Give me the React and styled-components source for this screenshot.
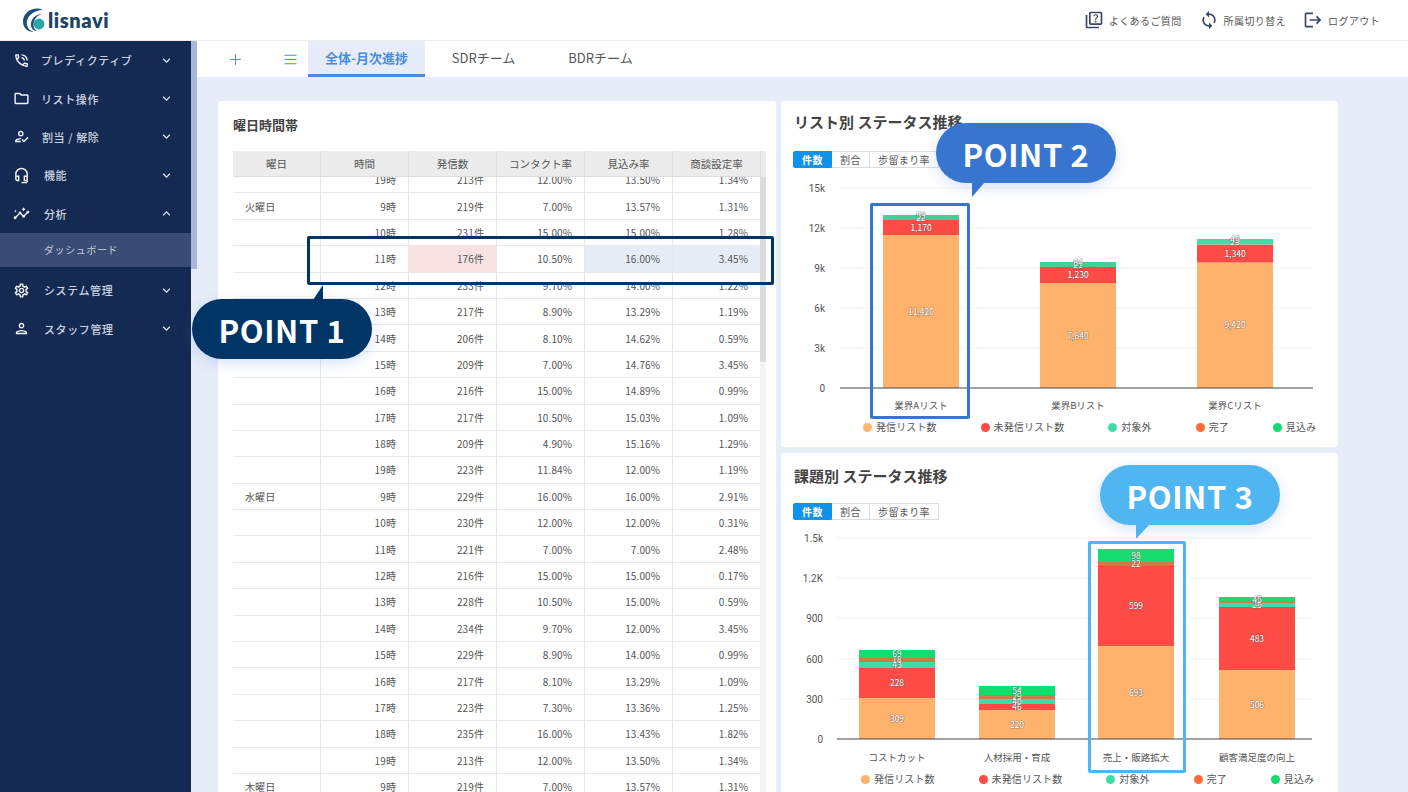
import { createGlobalStyle, styled } from "styled-components"
import {
  MdExpandMore, MdExpandLess, MdOutlineQuiz, MdSync, MdLogout, MdOutlinePhoneInTalk, MdOutlineFolder,
  MdOutlineHowToReg, MdOutlineHeadsetMic, MdOutlineInsights, MdOutlineSettings, MdOutlinePerson,
} from "react-icons/md"
import { LuPlus, LuMenu } from "react-icons/lu"

const FONT = `"Noto Sans CJK JP", "Noto Sans", sans-serif`

const Global = createGlobalStyle`
  html, body { margin: 0; padding: 0; height: 100%; overflow: hidden; background: #fff; }
  body { font-family: ${FONT}; color: #555; }
  * { box-sizing: border-box; }
`

const Page = styled.div`
  position: relative;
  width: 1408px;
  height: 792px;
  overflow: hidden;
  display: flex;
  flex-direction: column;
`

const TopBar = styled.header`
  height: 41px;
  flex: none;
  display: flex;
  align-items: center;
  padding: 0 28px 0 22px;
  border-bottom: 1px solid #eee;
  background: #fff;
`

const Logo = styled.div`
  display: flex;
  align-items: center;
  gap: 2px;
  font-family: Lato, sans-serif;
  font-weight: 800;
  font-size: 20px;
  letter-spacing: 0.6px;
  color: #1d4468;
`

const Actions = styled.div`
  margin-left: auto;
  display: flex;
  align-items: center;
  gap: 17px;
`

const Action = styled.div`
  display: flex;
  align-items: center;
  gap: 5px;
  font-size: 10px;
  letter-spacing: 0.4px;
  color: #555;
  svg { font-size: 20px; color: #3b4766; }
`

const Body = styled.div`
  flex: 1;
  min-height: 0;
  display: flex;
`

const Sidebar = styled.nav`
  width: 191px;
  flex: none;
  background: #152a52;
  color: #ccd3e0;
`

const NavItem = styled.div`
  height: 38.4px;
  display: flex;
  align-items: center;
  padding: 0 17px 0 13px;
  font-size: 11px;
  font-weight: 500;
  letter-spacing: 0.6px;
  svg { flex: none; }
  .icon { font-size: 17px; color: #f2f4f8; margin-right: ${(p) => p.$gap}px; }
  .chev { margin-left: auto; font-size: 15px; color: #dfe4ec; }
`

const SubItem = styled.div`
  height: 34px;
  margin-bottom: 4px;
  display: flex;
  align-items: center;
  padding-left: 44px;
  background: #3a4c75;
  font-size: 10px;
  letter-spacing: 0.6px;
  color: #c5ccdb;
`

const SideScroll = styled.div`
  width: 6px;
  flex: none;
  background: #e6edf8;
`

const SideThumb = styled.div`
  height: 228px;
  background: #a9b6da;
`

const Main = styled.main`
  flex: 1;
  min-width: 0;
  display: flex;
  flex-direction: column;
  background: #e6edf8;
`

const TabBar = styled.div`
  height: 36px;
  flex: none;
  display: flex;
  align-items: stretch;
  background: #fff;
`

const TabTool = styled.div`
  display: flex;
  align-items: center;
  justify-content: center;
  width: ${(p) => p.$w}px;
  color: #4a8bdc;
  font-size: 17px;
`

const Tab = styled.div`
  width: 117px;
  display: flex;
  align-items: center;
  justify-content: center;
  font-size: 13px;
  font-weight: ${(p) => (p.$active ? 700 : 400)};
  color: ${(p) => (p.$active ? "#4a8bdc" : "#555")};
  background: ${(p) => (p.$active ? "#e6edf8" : "#fff")};
  border-bottom: 3px solid ${(p) => (p.$active ? "#4a8bdc" : "transparent")};
`

const Content = styled.div`
  flex: 1;
  min-height: 0;
  overflow: hidden;
  padding: 24px 0 0 21px;
  display: grid;
  grid-template-columns: 558px 557px;
  grid-template-rows: 346px 400px;
  column-gap: 5px;
  row-gap: 6px;
`

const Card = styled.section`
  background: #fff;
  border-radius: 3px;
  position: relative;
  min-width: 0;
`

const TableCard = styled(Card)`
  grid-row: 1 / span 2;
  padding: 0 10px 0 15px;
  overflow: hidden;
`

const Title = styled.h2`
  margin: 0;
  height: 50px;
  padding-top: ${(p) => p.$top}px;
  font-size: ${(p) => p.$size}px;
  line-height: 20px;
  font-weight: 700;
  color: #444;
`

const TableHead = styled.div`
  display: grid;
  grid-template-columns: repeat(6, 88px);
  width: 533px;
  height: 26px;
  background: #ececec;
  position: relative;
  z-index: 1;
`

const HeadCell = styled.div`
  display: flex;
  align-items: center;
  justify-content: center;
  font-size: 10.5px;
  color: #555;
  border-right: 1px solid #dcdcdc;
  border-bottom: 1px solid #ddd;
`

const TableBody = styled.div`
  display: flex;
  height: 640px;
  overflow: hidden;
`

const Rows = styled.div`
  width: 527px;
  margin-top: -10px;
  flex: none;
`

const Row = styled.div`
  display: grid;
  grid-template-columns: repeat(6, 88px);
  height: 26.4px;
`

const Cell = styled.div`
  display: flex;
  align-items: center;
  justify-content: ${(p) => (p.$left ? "flex-start" : "flex-end")};
  padding: 0 12px;
  font-size: 10px;
  letter-spacing: 0.1px;
  color: #555;
  background: ${(p) => p.$bg || "transparent"};
  border-right: 1px solid #e8e8e8;
  border-bottom: 1px solid #e8e8e8;
`

const Track = styled.div`
  width: 6px;
  flex: none;
  background: #f3f3f3;
`

const Thumb = styled.div`
  height: 185px;
  background: #dcdcdc;
`

const ChartCard = styled(Card)`
  padding: 0 0 0 13px;
`

const Segment = styled.div`
  display: flex;
  width: 146px;
  height: 17px;
  margin-left: -1px;
`

const SegButton = styled.div`
  flex: ${(p) => p.$w}px 0 0;
  display: flex;
  align-items: center;
  justify-content: center;
  font-size: 10px;
  letter-spacing: 0.4px;
  border: 1px solid ${(p) => (p.$on ? "#0e93e8" : "#ddd")};
  border-left-width: ${(p) => (p.$on ? 1 : 0)}px;
  background: ${(p) => (p.$on ? "#0e93e8" : "#fff")};
  color: ${(p) => (p.$on ? "#fff" : "#555")};
  font-weight: ${(p) => (p.$on ? 700 : 400)};
  border-radius: ${(p) => (p.$on ? "2px 0 0 2px" : "0")};
`

const ChartSvg = styled.svg`
  display: block;
  width: 557px;
  height: 240px;
  margin: 7px 0 0 -13px;
  font-family: ${FONT};
`

const Legend = styled.div`
  display: flex;
  gap: 44px;
  margin-top: 5px;
  padding-left: ${(p) => p.$left}px;
`

const LegendItem = styled.div`
  display: flex;
  align-items: center;
  gap: 4px;
  font-size: 10px;
  line-height: 14px;
  letter-spacing: 0.1px;
  color: #555;
  &::before {
    content: "";
    width: 9px;
    height: 9px;
    border-radius: 50%;
    background: ${(p) => p.$color};
  }
`

const Mark = styled.div`
  position: absolute;
  left: ${(p) => p.$x}px;
  top: ${(p) => p.$y}px;
  width: ${(p) => p.$w}px;
  height: ${(p) => p.$h}px;
  border: 3.5px solid ${(p) => p.$color};
  border-radius: 2px;
  z-index: 4;
`

const Bubble = styled.div`
  position: absolute;
  left: ${(p) => p.$x}px;
  top: ${(p) => p.$y}px;
  width: 180px;
  height: 60px;
  border-radius: 30px;
  background: ${(p) => p.$color};
  color: #fff;
  display: flex;
  align-items: center;
  justify-content: center;
  font-size: 31px;
  font-weight: 700;
  letter-spacing: 0.6px;
  box-shadow: 0 4px 14px rgba(70, 120, 210, 0.22);
  z-index: 5;
  &::after {
    content: "";
    position: absolute;
    background: ${(p) => p.$color};
    left: ${(p) => p.$tailX}px;
    top: -14px;
    width: ${(p) => p.$tailW}px;
    height: 15px;
    clip-path: polygon(100% 0, 100% 100%, 0 100%);
    ${(p) => p.$down && "top: 59px; clip-path: polygon(0 0, 100% 0, 0 100%);"}
  }
`

const rows = [
  ["", "19時", "213件", "12.00%", "13.50%", "1.34%"],
  ["火曜日", "9時", "219件", "7.00%", "13.57%", "1.31%"],
  ["", "10時", "231件", "15.00%", "15.00%", "1.28%"],
  ["", "11時", "176件", "10.50%", "16.00%", "3.45%"],
  ["", "12時", "233件", "9.70%", "14.00%", "1.22%"],
  ["", "13時", "217件", "8.90%", "13.29%", "1.19%"],
  ["", "14時", "206件", "8.10%", "14.62%", "0.59%"],
  ["", "15時", "209件", "7.00%", "14.76%", "3.45%"],
  ["", "16時", "216件", "15.00%", "14.89%", "0.99%"],
  ["", "17時", "217件", "10.50%", "15.03%", "1.09%"],
  ["", "18時", "209件", "4.90%", "15.16%", "1.29%"],
  ["", "19時", "223件", "11.84%", "12.00%", "1.19%"],
  ["水曜日", "9時", "229件", "16.00%", "16.00%", "2.91%"],
  ["", "10時", "230件", "12.00%", "12.00%", "0.31%"],
  ["", "11時", "221件", "7.00%", "7.00%", "2.48%"],
  ["", "12時", "216件", "15.00%", "15.00%", "0.17%"],
  ["", "13時", "228件", "10.50%", "15.00%", "0.59%"],
  ["", "14時", "234件", "9.70%", "12.00%", "3.45%"],
  ["", "15時", "229件", "8.90%", "14.00%", "0.99%"],
  ["", "16時", "217件", "8.10%", "13.29%", "1.09%"],
  ["", "17時", "223件", "7.30%", "13.36%", "1.25%"],
  ["", "18時", "235件", "16.00%", "13.43%", "1.82%"],
  ["", "19時", "213件", "12.00%", "13.50%", "1.34%"],
  ["木曜日", "9時", "219件", "7.00%", "13.57%", "1.31%"],
]

const highlight = { 2: "#f6e1e3", 4: "#e6edf6", 5: "#e6edf6" }

const ORANGE = "#ffb26b"
const RED = "#ff4b45"
const TEAL = "#3fdca8"
const BROWN = "#c97f42"
const GREEN = "#14dc6e"

const legend = [
  ["発信リスト数", ORANGE],
  ["未発信リスト数", RED],
  ["対象外", TEAL],
  ["完了", "#ff6b35"],
  ["見込み", GREEN],
]

// coords are page pixels, the svg viewBox takes care of the offset
const chart1 = {
  viewY: 175,
  x0: 840,
  x1: 1313,
  base: 388,
  ticks: [["15k", 188], ["12k", 228], ["9k", 268], ["6k", 308], ["3k", 348], ["0", 388]],
  tickX: 825,
  labelY: 409,
  bars: [
    {
      x: 883, name: "業界Aリスト",
      parts: [[235, ORANGE, "11,420"], [220, RED, "1,170"], [215, "#45cf96", "22"]],
      extra: ["59"],
    },
    {
      x: 1040, name: "業界Bリスト",
      parts: [[283, ORANGE, "7,840"], [267, RED, "1,230"], [262, "#45cf96", "21"]],
      extra: ["64"],
    },
    {
      x: 1197, name: "業界Cリスト",
      parts: [[262.5, ORANGE, "9,420"], [244.5, RED, "1,340"], [239, TEAL, "25"]],
      extra: ["45"],
    },
  ],
}

const chart2 = {
  viewY: 527,
  x0: 837,
  x1: 1312,
  base: 739,
  ticks: [["1.5k", 538], ["1.2K", 578], ["900", 618], ["600", 659], ["300", 699], ["0", 739]],
  tickX: 823,
  labelY: 761,
  bars: [
    {
      x: 859, name: "コストカット",
      parts: [[698, ORANGE, "309"], [668, RED, "228"], [662, TEAL, "43"], [658, BROWN, "18"], [650, GREEN, "69"]],
    },
    {
      x: 979, name: "人材採用・育成",
      parts: [[710, ORANGE, "220"], [704, RED, "46"], [699, TEAL, "40"], [695, BROWN, "29"], [686, GREEN, "54"]],
    },
    {
      x: 1098, name: "売上・販路拡大",
      parts: [[646, ORANGE, "693"], [566, RED, "599"], [562, BROWN, "22"], [549, GREEN, "98"]],
    },
    {
      x: 1219, name: "顧客満足度の向上",
      parts: [[670, ORANGE, "506"], [607, RED, "483"], [603, TEAL, "25"], [602, BROWN, "8"], [597, GREEN, "45"]],
    },
  ],
}

const BAR_W = 76

const ValueLabel = ({ x, y, children }) => (
  <text
    x={x}
    y={y + 3}
    textAnchor="middle"
    fontSize="8.5"
    fill="#fff"
    stroke="rgba(90,90,90,.55)"
    strokeWidth="1.2"
    paintOrder="stroke"
  >
    {children}
  </text>
)

const Chart = ({ data }) => (
  <ChartSvg viewBox={`781 ${data.viewY} 557 240`}>
    {data.ticks.map(([label, y]) => (
      <g key={label}>
        {label !== "0" && <line x1={data.x0} x2={data.x1} y1={y} y2={y} stroke="#f3f3f3" />}
        <text x={data.tickX} y={y + 3.5} textAnchor="end" fontSize="10" fill="#555" fontFamily="Roboto, sans-serif">
          {label}
        </text>
      </g>
    ))}
    {data.bars.map((bar) => {
      const mid = bar.x + BAR_W / 2
      return (
        <g key={bar.name}>
          {bar.parts.map(([top, color], i) => {
            const bottom = i === 0 ? data.base : bar.parts[i - 1][0]
            return <rect key={i} x={bar.x} y={top} width={BAR_W} height={bottom - top} fill={color} />
          })}
          {bar.parts.map(([top, , label], i) => {
            const bottom = i === 0 ? data.base : bar.parts[i - 1][0]
            return <ValueLabel key={i} x={mid} y={(top + bottom) / 2}>{label}</ValueLabel>
          })}
          {bar.extra && <ValueLabel x={mid} y={bar.parts[bar.parts.length - 1][0] + 1}>{bar.extra[0]}</ValueLabel>}
          <text x={mid} y={data.labelY} textAnchor="middle" fontSize="9.5" fill="#555">{bar.name}</text>
        </g>
      )
    })}
    <line x1={data.x0} x2={data.x1} y1={data.base} y2={data.base} stroke="#444" />
  </ChartSvg>
)

const Status = ({ title, top, data, legendLeft }) => (
  <ChartCard>
    <Title $top={top} $size={15}>{title}</Title>
    <Segment>
      <SegButton $on $w={39}>件数</SegButton>
      <SegButton $w={38}>割合</SegButton>
      <SegButton $w={69}>歩留まり率</SegButton>
    </Segment>
    <Chart data={data} />
    <Legend $left={legendLeft}>
      {legend.map(([label, color]) => (
        <LegendItem key={label} $color={color}>{label}</LegendItem>
      ))}
    </Legend>
  </ChartCard>
)

const nav = [
  { label: "プレディクティブ", Icon: MdOutlinePhoneInTalk, gap: 11 },
  { label: "リスト操作", Icon: MdOutlineFolder, gap: 11 },
  { label: "割当 / 解除", Icon: MdOutlineHowToReg, gap: 12 },
  { label: "機能", Icon: MdOutlineHeadsetMic, gap: 14 },
  { label: "分析", Icon: MdOutlineInsights, gap: 14, open: true },
  { label: "システム管理", Icon: MdOutlineSettings, gap: 14 },
  { label: "スタッフ管理", Icon: MdOutlinePerson, gap: 14 },
]

const App = () => (
  <Page>
    <Global />
    <TopBar>
      <Logo>
        <svg width="24" height="26" viewBox="0 0 24 26">
          <path d="M21 2.5C11 -1 1 5 1 14.5 1 21 6 25.5 12 24.5 8 24 4.6 20.5 4.8 15.5 5 9 11 4 21 2.5Z" fill="#1d4f7c" />
          <path d="M9 18.5C8.5 12 13 7.5 20 7 14 9 11.5 13 11.5 18.5 11.5 21 13 23 15 24 11.5 24 9.3 21.5 9 18.5Z" fill="#1d4f7c" />
          <circle cx="17" cy="17" r="5.4" fill="#2ba6a8" />
        </svg>
        <span>lisnavi</span>
      </Logo>
      <Actions>
        <Action><MdOutlineQuiz />よくあるご質問</Action>
        <Action><MdSync />所属切り替え</Action>
        <Action><MdLogout />ログアウト</Action>
      </Actions>
    </TopBar>
    <Body>
      <Sidebar>
        {nav.map(({ label, Icon, gap, open }) => (
          <div key={label}>
            <NavItem $gap={gap}>
              <Icon className="icon" />
              {label}
              {open ? <MdExpandLess className="chev" /> : <MdExpandMore className="chev" />}
            </NavItem>
            {open && <SubItem>ダッシュボード</SubItem>}
          </div>
        ))}
      </Sidebar>
      <SideScroll><SideThumb /></SideScroll>
      <Main>
        <TabBar>
          <TabTool $w={76}><LuPlus strokeWidth={1.4} /></TabTool>
          <TabTool $w={35}><LuMenu strokeWidth={1.4} /></TabTool>
          <Tab $active>全体-月次進捗</Tab>
          <Tab>SDRチーム</Tab>
          <Tab>BDRチーム</Tab>
        </TabBar>
        <Content>
          <TableCard>
            <Title $top={14} $size={13}>曜日時間帯</Title>
            <TableHead>
              {["曜日", "時間", "発信数", "コンタクト率", "見込み率", "商談設定率"].map((h) => (
                <HeadCell key={h}>{h}</HeadCell>
              ))}
            </TableHead>
            <TableBody>
              <Rows>
                {rows.map((row, r) => (
                  <Row key={r}>
                    {row.map((v, c) => (
                      <Cell key={c} $left={c === 0} $bg={r === 3 ? highlight[c] : undefined}>{v}</Cell>
                    ))}
                  </Row>
                ))}
              </Rows>
              <Track><Thumb /></Track>
            </TableBody>
          </TableCard>
          <Status title="リスト別 ステータス推移" top={11} data={chart1} legendLeft={69} />
          <Status title="課題別 ステータス推移" top={13} data={chart2} legendLeft={67} />
        </Content>
      </Main>
    </Body>

    <Mark $x={307} $y={236} $w={467} $h={49} $color="#003566" />
    <Mark $x={870} $y={203} $w={100} $h={216} $color="#3875cf" />
    <Mark $x={1088} $y={541} $w={98} $h={232} $color="#4fb6f2" />
    <Bubble $x={192} $y={299} $color="#003566" $tailX={121} $tailW={10}>POINT 1</Bubble>
    <Bubble $x={936} $y={123} $color="#3875cf" $down $tailX={36} $tailW={13}>POINT 2</Bubble>
    <Bubble $x={1100} $y={465} $color="#4fb6f2" $down $tailX={36} $tailW={14}>POINT 3</Bubble>
  </Page>
)

export default App
